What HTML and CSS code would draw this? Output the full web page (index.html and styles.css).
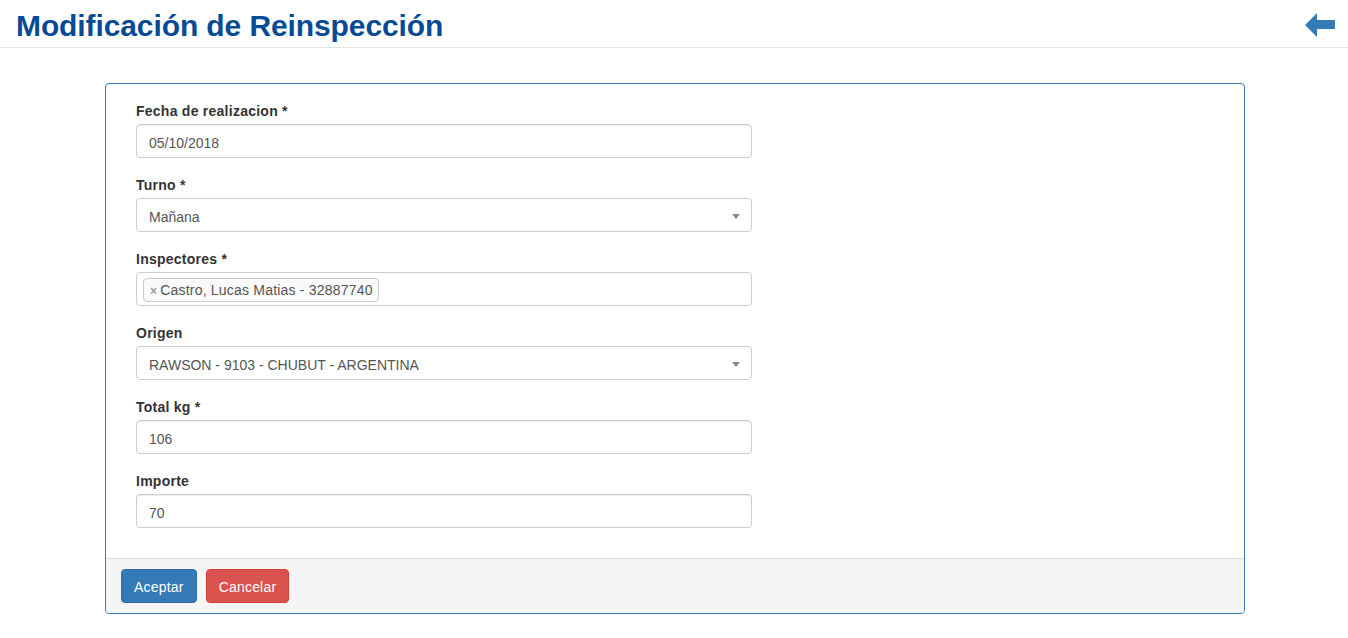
FILE: index.html
```html
<!DOCTYPE html>
<html lang="es">
<head>
<meta charset="utf-8">
<title>Modificación de Reinspección</title>
<link rel="stylesheet" href="styles.css">
</head>
<body>
<header class="page-header">
  <h1 class="title">Modificación de Reinspección</h1>
  <a class="back" href="#" aria-label="Volver">
    <svg width="30" height="24" viewBox="0 0 30 24"><path d="M0 12 L12 0 L12 7 L30 7 L30 16 L12 16 L12 24 Z" fill="#337ab7"/></svg>
  </a>
</header>
<main class="content">
  <form class="panel">
    <div class="panel-body">
      <div class="fields">
        <div class="group">
          <label class="label">Fecha de realizacion *</label>
          <div class="control">05/10/2018</div>
        </div>
        <div class="group">
          <label class="label">Turno *</label>
          <div class="control select">Mañana<span class="caret"></span></div>
        </div>
        <div class="group">
          <label class="label">Inspectores *</label>
          <div class="control multi"><span class="tag"><span class="x">×</span>Castro, Lucas Matias - 32887740</span></div>
        </div>
        <div class="group">
          <label class="label">Origen</label>
          <div class="control select">RAWSON - 9103 - CHUBUT - ARGENTINA<span class="caret"></span></div>
        </div>
        <div class="group">
          <label class="label">Total kg *</label>
          <div class="control">106</div>
        </div>
        <div class="group">
          <label class="label">Importe</label>
          <div class="control">70</div>
        </div>
      </div>
    </div>
    <div class="panel-footer">
      <button type="button" class="btn btn-primary">Aceptar</button>
      <button type="button" class="btn btn-danger">Cancelar</button>
    </div>
  </form>
</main>
</body>
</html>
```
FILE: styles.css
```css
* { box-sizing: border-box; }
html, body { margin: 0; padding: 0; }
body {
  font-family: "Liberation Sans", Arial, sans-serif;
  font-size: 14px;
  line-height: 20px;
  color: #333;
  background: #fff;
}
.page-header {
  display: flex;
  align-items: center;
  justify-content: space-between;
  height: 48px;
  padding: 4px 13px 0 16px;
  border-bottom: 1px solid #e5e5e5;
}
.title {
  margin: 0;
  font-size: 30px;
  line-height: 40px;
  font-weight: bold;
  color: #074b96;
  letter-spacing: -0.1px;
}
.back { display: block; height: 24px; margin-top: -2px; }
.back svg { display: block; }
.content { padding: 35px 103px 0 105px; }
.panel {
  border: 1px solid #337ab7;
  border-radius: 4px;
  background: #fff;
}
.panel-body { padding: 15px 30px 15px 30px; }
.fields { width: 616px; }
.group { margin-bottom: 15px; }
.label {
  display: block;
  font-weight: bold;
  padding-top: 2px;
  margin-bottom: 3px;
  line-height: 20px;
  letter-spacing: 0.25px;
}
.control {
  position: relative;
  height: 34px;
  padding: 8px 12px 4px;
  border: 1px solid #ccc;
  border-radius: 4px;
  color: #555;
  line-height: 20px;
  box-shadow: inset 0 1px 1px rgba(0,0,0,.075);
}
.select { box-shadow: none; border-color: #ccc; }
.caret {
  position: absolute;
  right: 11px;
  top: 15px;
  width: 0;
  height: 0;
  border-left: 4px solid transparent;
  border-right: 4px solid transparent;
  border-top: 5px solid #888;
}
.multi { padding: 5px 6px; box-shadow: none; }
.tag {
  display: inline-block;
  height: 24px;
  line-height: 23px;
  padding: 0 5px 0 6px;
  border: 1px solid #ccc;
  border-radius: 4px;
  background: #fafafa;
  color: #555;
  vertical-align: top;
  letter-spacing: 0.2px;
}
.tag .x { color: #999; font-size: 12px; font-weight: bold; margin-right: 3px; }
.panel-footer {
  padding: 10px 15px;
  background: #f5f5f5;
  border-top: 1px solid #ddd;
  border-radius: 0 0 3px 3px;
  display: flex;
  gap: 9px;
}
.btn {
  font-family: inherit;
  font-size: 14px;
  line-height: 20px;
  height: 34px;
  padding: 7px 12px 5px;
  border: 1px solid transparent;
  border-radius: 4px;
  color: #fff;
  cursor: pointer;
  letter-spacing: 0.2px;
}
.btn-primary { background: #337ab7; border-color: #2e6da4; }
.btn-danger { background: #d9534f; border-color: #d43f3a; }
```
